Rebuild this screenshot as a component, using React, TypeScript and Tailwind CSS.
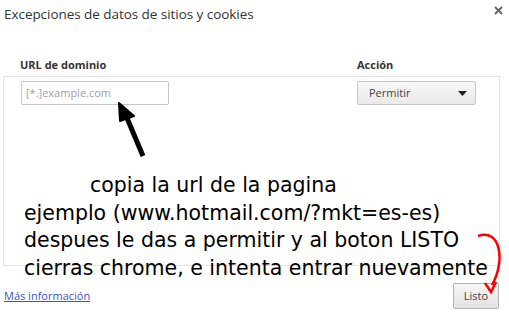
import React from "react";

export default function App() {
  return (
    <div className="relative w-[509px] h-[324px] overflow-hidden bg-white font-['Open_Sans',sans-serif] text-[#333]">
      {/* Header */}
      <div className="flex items-start justify-between pl-[4px] pr-[6px] pt-[4px]">
        <h1 className="text-[13.5px] leading-[20px] text-[#333] tracking-[-0.05px]">Excepciones de datos de sitios y cookies</h1>
        <svg width="9" height="9" viewBox="0 0 9 9" className="mt-[2px]">
          <path d="M1 1 L8 8 M8 1 L1 8" stroke="#666" strokeWidth="2" />
        </svg>
      </div>

      {/* Column headers */}
      <div className="mt-[34px] flex text-[11px] font-bold leading-[14px] text-[#333]">
        <div className="pl-[20px] w-[357px]">URL de dominio</div>
        <div>Acción</div>
      </div>

      {/* List box */}
      <div className="mx-[3px] mt-[4px] h-[190px] w-[497px] border border-[#e3e3e3]">
        <div className="flex items-center pt-[4px]">
          <div className="ml-[17px] flex h-[24px] w-[148px] items-center rounded-[2px] border border-[#c8c8c8] px-[4px] text-[11px] text-[#a0a0a0]">
            [*.]example.com
          </div>
          <div className="ml-[188px] flex h-[24px] w-[119px] items-center justify-between rounded-[2px] border border-[#c6c6c6] bg-gradient-to-b from-[#f8f8f8] to-[#e9e9e9] pl-[11px] pr-[8px] text-[11px] text-[#444]">
            <span>Permitir</span>
            <svg width="9" height="5" viewBox="0 0 9 5">
              <path d="M0 0 L9 0 L4.5 5 Z" fill="#222" />
            </svg>
          </div>
        </div>
      </div>

      {/* Footer */}
      <div className="mt-[17px] flex items-center justify-between pl-[4px] pr-[10px]">
        <a className="text-[11px] text-[#3b55c4] underline">Más información</a>
        <button className="h-[26px] w-[46px] rounded-[2px] border border-[#b4b4b4] bg-gradient-to-b from-[#f6f6f6] to-[#e2e2e2] text-[11px] text-[#444]">
          Listo
        </button>
      </div>

      {/* Annotation overlay */}
      <div className="absolute left-[24px] top-[172px] font-['DejaVu_Sans',sans-serif] text-[20.5px] leading-[27.5px] text-black whitespace-pre">
        <div className="pl-[66px]">copia la url de la pagina</div>
        <div>ejemplo (www.hotmail.com/?mkt=es-es)</div>
        <div>despues le das a permitir y al boton LISTO</div>
        <div>cierras chrome, e intenta entrar nuevamente</div>
      </div>

      <svg className="absolute left-0 top-0" width="509" height="324" viewBox="0 0 509 324">
        {/* black arrow */}
        <path d="M143 156 L127 118" stroke="#000" strokeWidth="5" strokeLinecap="butt" />
        <path d="M119 103 L134 116 L120 121 Z" fill="#000" stroke="#000" strokeWidth="2" strokeLinejoin="round" />
        {/* red curved arrow */}
        <path d="M478 236 C 500 228, 506 260, 492 285" stroke="#ff0000" strokeWidth="2.5" fill="none" />
        <path d="M485 283 L491 292 L496 282" stroke="#ff0000" strokeWidth="2.5" fill="none" />
      </svg>
    </div>
  );
}
